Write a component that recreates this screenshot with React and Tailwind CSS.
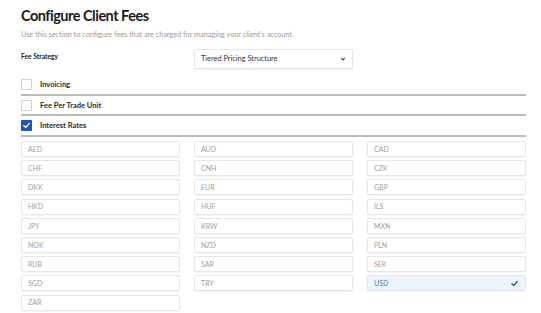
import React from 'react';

const currencies = [
  'AED', 'AUD', 'CAD',
  'CHF', 'CNH', 'CZK',
  'DKK', 'EUR', 'GBP',
  'HKD', 'HUF', 'ILS',
  'JPY', 'KRW', 'MXN',
  'NOK', 'NZD', 'PLN',
  'RUB', 'SAR', 'SEK',
  'SGD', 'TRY', 'USD',
  'ZAR',
];

const Check = ({ className }) => (
  <svg viewBox="0 0 12 12" className={className} fill="none" stroke="currentColor" strokeWidth="1.8" strokeLinecap="round" strokeLinejoin="round">
    <path d="M2.5 6.3 L5 8.6 L9.6 3.4" />
  </svg>
);

const FeeRow = ({ label, checked }) => (
  <div className="flex items-center gap-[8px] pt-[4px] pb-[3.5px] border-b-2 border-[#bcbcbc]">
    {checked ? (
      <div className="w-[11px] h-[11px] bg-[#1d55c9] flex items-center justify-center rounded-[1px]">
        <Check className="w-[9px] h-[9px] text-white" />
      </div>
    ) : (
      <div className="w-[11px] h-[11px] border border-[#d2d2d2] bg-white rounded-[1px]" />
    )}
    <span className="text-[7.5px] font-bold text-[#2a2a2a] leading-[11px]">{label}</span>
  </div>
);

const App = () => {
  const selected = 'USD';

  return (
    <div className="w-[541px] h-[313px] bg-white pl-[21px] pr-[15px] pt-[6px] overflow-hidden" style={{ fontFamily: 'Lato, "Liberation Sans", sans-serif' }}>
      <h1 className="text-[14.5px] leading-[20px] font-bold tracking-[-0.5px] text-[#1a1a1a]">Configure Client Fees</h1>
      <p className="text-[7.3px] leading-[10px] text-[#9a9a9a] mt-[4px]">
        Use this section to configure fees that are charged for managing your client's account.
      </p>

      <div className="grid grid-cols-3 gap-x-[14px] mt-[9px] items-start">
        <span className="text-[6.7px] font-bold text-[#222] pt-[2px]">Fee Strategy</span>
        <div className="h-[20px] border border-[#e4e4e4] rounded-[2px] shadow-[0_1px_1px_rgba(0,0,0,0.05)] flex items-center justify-between px-[6px]">
          <span className="text-[7.4px] text-[#333]">Tiered Pricing Structure</span>
          <svg viewBox="0 0 10 10" className="w-[6px] h-[6px] text-[#444]" fill="none" stroke="currentColor" strokeWidth="2">
            <path d="M2 3.5 L5 6.5 L8 3.5" />
          </svg>
        </div>
      </div>

      <div className="flex flex-col mt-[6px]">
        <FeeRow label="Invoicing" />
        <FeeRow label="Fee Per Trade Unit" />
        <FeeRow label="Interest Rates" checked />
      </div>

      <div className="grid grid-cols-3 gap-x-[14px] gap-y-[3.2px] mt-[4.5px]">
        {currencies.map((c) => {
          const on = c === selected;
          return (
            <div
              key={c}
              className={
                on
                  ? 'h-[16px] border border-[#dfe6f1] bg-[#eef4fd] rounded-[2px] shadow-[0_1px_1px_rgba(0,0,0,0.05)] flex items-center justify-between px-[6px]'
                  : 'h-[16px] border border-[#e6e6e6] bg-white rounded-[2px] shadow-[0_1px_1px_rgba(0,0,0,0.04)] flex items-center justify-between px-[6px]'
              }
            >
              <span className={on ? 'text-[7px] text-[#5a76b0]' : 'text-[7px] text-[#a0a0a0]'}>{c}</span>
              {on && <Check className="w-[9px] h-[9px] text-[#2a5cb8]" />}
            </div>
          );
        })}
      </div>
    </div>
  );
};

export default App;
